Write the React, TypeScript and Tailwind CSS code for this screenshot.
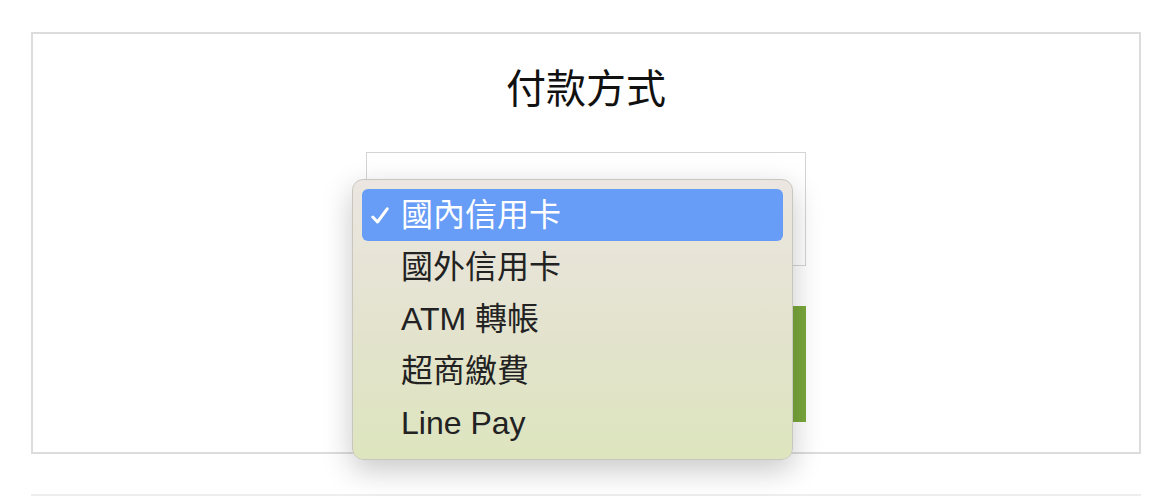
const OPTIONS = ['國內信用卡', '國外信用卡', 'ATM 轉帳', '超商繳費', 'Line Pay']

const FONT = "font-['Helvetica','Liberation_Sans','Noto_Sans_CJK_TC',sans-serif]"

function Check() {
  return (
    <svg width="18" height="17" viewBox="0 0 18 17" fill="none" className="ml-[9px]">
      <path d="M1.8 10 L6.5 15 L16.2 1.8" stroke="white" strokeWidth="3" strokeLinecap="round" strokeLinejoin="round" />
    </svg>
  )
}

export default function App() {
  const selected = 0
  return (
    <div className={`relative h-[496px] w-full overflow-hidden bg-white ${FONT}`}>
      <div className="pl-[31px] pr-[33px] pt-[32px]">
        {/* payment card */}
        <div className="flex h-[422px] flex-col items-center border-2 border-[#dcdcdc]">
          <h1 className="mt-[30px] text-[40px] leading-[50px] text-[#111]">付款方式</h1>
          <div className="mt-[38px] h-[114px] w-[440px] border border-[#d4d4d4] bg-white" />
          <button className="mt-[40px] h-[116px] w-[440px] bg-[#7aa83c]" />
        </div>
        <div className="mt-[40px] h-[3px] bg-[#eeeeee]" />
      </div>

      {/* native select popup */}
      <div className="absolute left-[352px] top-[179px] w-[441px] rounded-[11px] border border-[#c9c6c0] bg-gradient-to-b from-[#ebe6e1] via-[#e4e3cf] to-[#dde5be] px-[9px] pb-[10px] pt-[9px] shadow-[0_10px_30px_rgba(0,0,0,0.22)]">
        {OPTIONS.map((o, i) => (
          <div
            key={o}
            className={
              i === selected
                ? 'flex h-[52px] items-center rounded-[6px] bg-[#679cf7] text-white'
                : 'flex h-[52px] items-center text-[#222]'
            }
          >
            <span className="flex w-[39px] items-center">{i === selected && <Check />}</span>
            <span className="text-[32px] leading-none">{o}</span>
          </div>
        ))}
      </div>
    </div>
  )
}
